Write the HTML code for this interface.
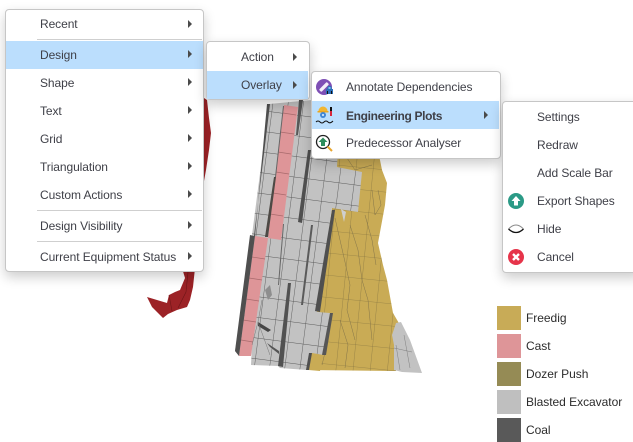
<!DOCTYPE html>
<html><head><meta charset="utf-8">
<style>
html,body{margin:0;padding:0;background:#fff}
#p{position:relative;width:633px;height:442px;overflow:hidden;background:#fff;font-family:"Liberation Sans",sans-serif;font-size:12px;color:#3f4048}
#art{position:absolute;left:0;top:0}
.m{position:absolute;box-sizing:border-box;background:#fff;border:1px solid #c6c6c6;border-radius:4px;box-shadow:0 5px 12px rgba(0,0,0,.2)}
.h{position:absolute;background:#bbdefd}
.t{position:absolute;white-space:nowrap;line-height:16px;height:16px;letter-spacing:-.08px}
.a{position:absolute;width:0;height:0;border-left:4px solid #4a4a4a;border-top:4px solid transparent;border-bottom:4px solid transparent}
.s{position:absolute;height:1px;background:#cfcfcf}
.l{position:absolute;left:526px;white-space:nowrap;line-height:16px;color:#2c2c2c;letter-spacing:-.03px}
.c{position:absolute;left:497px;width:24px;height:24px}
svg.i{position:absolute}
</style></head>
<body><div id="p">
<svg id="art" width="633" height="442" viewBox="0 0 633 442">
<defs>
<pattern id="g" width="15" height="20.4" patternUnits="userSpaceOnUse" patternTransform="matrix(1 .13 -.128 1 269 132)">
<path d="M0 0H15M0 0V20.4" stroke="#5a5a5a" stroke-width=".9" fill="none"/>
</pattern>
<pattern id="y" width="17" height="22" patternUnits="userSpaceOnUse" patternTransform="matrix(1 .1 -.1 1 339 165)">
<path d="M0 0H17M0 0V22" stroke="#75673c" stroke-width=".55" fill="none"/>
</pattern>
<filter id="b"><feGaussianBlur stdDeviation=".35"/></filter>
</defs>
<g filter="url(#b)">
<!-- red -->
<path d="M204 98L207 100 209 118 211 133 209 150 206 170 204 181Z" fill="#9c2326"/>
<path d="M182 268L195 268 193 287 190 300 187 307 177 310 168 314 163 318 152 307 147 297 157 300 167 303 169 295 175 292 180 290 185 278Z" fill="#9c2326"/>
<path d="M188 272L186 292 178 308M169 295L172 311" stroke="#6e1518" stroke-width=".6" fill="none"/>
<!-- yellow -->
<path id="yl" d="M330 150L378 150 382 170 387 183 385 205 378 243 383 265 387 280 393 313 400 325 396 371 307 370 310 353 325 313 317 312 332 208 338 170Z" fill="#c9ab55"/>
<path d="M330 150L378 150 382 170 387 183 385 205 378 243 383 265 387 280 393 313 400 325 396 371 307 370 310 353 325 313 317 312 332 208 338 170Z" fill="url(#y)"/>
<path d="M335 218L340 240 345 262 350 285 347 310 355 340M350 225L358 250 362 280 368 300 372 340M365 215L372 240 376 265M322 320L328 340 322 365M340 320L348 345 345 368M378 190L381 205 375 215 372 190M345 155L355 170 372 165" stroke="#85754a" stroke-width=".5" fill="none"/>
<!-- light gray SE -->
<path d="M396 323L401 322 410 340 422 373 402 372 394 370 394 345 392 335Z" fill="#c2c2c2"/>
<path d="M396 345L400 370M404 335L410 368M394 348L412 352" stroke="#808080" stroke-width=".5" fill="none"/>
<!-- gray silhouette -->
<path d="M269 104L312 100 312 150 338 150 337 167 362 172 358 212 332 208 317 312 330 313 323 355 310 353 307 370 280 368 278 366 251 365 252 345 239 356 235 351 252 235Z" fill="#c2c2c2"/>
<path d="M269 104L312 100 312 150 338 150 337 167 362 172 358 212 332 208 317 312 330 313 323 355 310 353 307 370 280 368 278 366 251 365 252 345 239 356 235 351 252 235Z" fill="url(#g)"/>
<!-- pink -->
<path d="M284 105L298 107 281 240 268 238Z" fill="#de9598"/>
<path d="M255 236L268 238 251 356 239 356Z" fill="#de9598"/>
<path d="M276 172L289 174M273 193L286 195M270 214L283 216M283 113L296 115M280 132L294 134M278 152L291 154M252 257L265 259M249 278L262 280M246 299L259 301M243 320L256 322M241 340L253 342" stroke="#a86a6c" stroke-width=".7" fill="none"/>
<!-- dark strips -->
<path d="M267 104L270 104 254 236 250 235 235 351 239 356 255 236Z" fill="#505050"/>
<path d="M274 177L276 177 268 237 265 237Z" fill="#4e4a44"/>
<path d="M283 106L284 106 276 177 275 177Z" fill="#666"/>
<path d="M299 100L303 100 298 135 296 135Z" fill="#585858"/>
<path d="M308 150L311 150 302 223 298 222Z" fill="#4f4f4f"/>
<path d="M332 210L335 210 320 312 315 311Z" fill="#4f4f4f"/>
<path d="M330 313L333 313 326 355 322 355Z" fill="#565656"/>
<path d="M288 283L291 283 283 367 278 366Z" fill="#515151"/>
<path d="M283 224L284 224 279 285 278 285Z" fill="#666"/>
<path d="M311 225L313 225 303 305 301 305Z" fill="#5a5a5a"/>
<!-- messy area -->
<path d="M265 290L270 285 272 295 268 300Z" fill="#8e8e8e"/>
<path d="M258 322L271 330 268 332 258 326Z" fill="#444"/>
<path d="M267 343L279 351 279 354 270 347Z" fill="#555"/>
<path d="M262 300L258 322 252 345M258 322L270 355" stroke="#777" stroke-width=".5" fill="none"/>
<path d="M309 370L312 353 323 355 320 371Z" fill="#c9ab55"/>
<path d="M306 370L309 353 312 353 309 370Z" fill="#4f4f4f"/>
<path d="M341 209L344 222 346 212Z" fill="#cfcfcf"/>
</g>
</svg>

<div class="c" style="top:306px;background:#c8ab57"></div>
<div class="c" style="top:334px;background:#de9598"></div>
<div class="c" style="top:362px;background:#958b55"></div>
<div class="c" style="top:390px;background:#bfbfbf"></div>
<div class="c" style="top:418px;background:#595959"></div>
<div class="l" style="top:310px">Freedig</div>
<div class="l" style="top:338px">Cast</div>
<div class="l" style="top:366px">Dozer Push</div>
<div class="l" style="top:394px">Blasted Excavator</div>
<div class="l" style="top:422px">Coal</div>

<!-- main menu -->
<div class="m" style="left:5px;top:9px;width:199px;height:263px"></div>
<div class="s" style="left:37px;top:39px;width:165px"></div>
<div class="h" style="left:6px;top:41px;width:197px;height:28px"></div>
<div class="s" style="left:37px;top:210px;width:165px"></div>
<div class="s" style="left:37px;top:241px;width:165px"></div>
<div class="t" style="left:40px;top:16px">Recent</div><div class="a" style="left:188px;top:20px"></div>
<div class="t" style="left:40px;top:47px">Design</div><div class="a" style="left:188px;top:50px"></div>
<div class="t" style="left:40px;top:75px">Shape</div><div class="a" style="left:188px;top:78px"></div>
<div class="t" style="left:40px;top:103px">Text</div><div class="a" style="left:188px;top:106px"></div>
<div class="t" style="left:40px;top:131px">Grid</div><div class="a" style="left:188px;top:134px"></div>
<div class="t" style="left:40px;top:159px">Triangulation</div><div class="a" style="left:188px;top:162px"></div>
<div class="t" style="left:40px;top:187px">Custom Actions</div><div class="a" style="left:188px;top:190px"></div>
<div class="t" style="left:40px;top:218px">Design Visibility</div><div class="a" style="left:188px;top:221px"></div>
<div class="t" style="left:40px;top:249px">Current Equipment Status</div><div class="a" style="left:188px;top:252px"></div>

<!-- submenu 1 -->
<div class="m" style="left:206px;top:41px;width:104px;height:59px"></div>
<div class="h" style="left:207px;top:71px;width:101px;height:28px"></div>
<div class="t" style="left:241px;top:49px">Action</div><div class="a" style="left:293px;top:53px"></div>
<div class="t" style="left:241px;top:77px">Overlay</div><div class="a" style="left:293px;top:81px"></div>

<!-- submenu 2 -->
<div class="m" style="left:311px;top:71px;width:190px;height:88px"></div>
<div class="h" style="left:312px;top:101px;width:187px;height:28px"></div>
<div class="t" style="left:346px;top:79px">Annotate Dependencies</div>
<div class="t" style="left:346px;top:108px;font-weight:bold;letter-spacing:-.35px">Engineering Plots</div><div class="a" style="left:484px;top:111px"></div>
<div class="t" style="left:346px;top:135px">Predecessor Analyser</div>

<svg class="i" style="left:315px;top:78px" width="20" height="20" viewBox="0 0 20 20">
<circle cx="9" cy="9" r="8" fill="#7e4fb5"/>
<rect x="3.5" y="7.3" width="11" height="3.4" rx="1" transform="rotate(-45 9 9)" fill="#f3eef9"/>
<path d="M13 8h3l1 3h1v5h-7v-5h1z" fill="#2d6fb8"/>
<path d="M12 13h1v3h-1zM16 13h1v3h-1z" fill="#111"/>
<path d="M13.5 9h2v2h-2z" fill="#7cc4ef"/>
</svg>
<svg class="i" style="left:315px;top:105px" width="20" height="20" viewBox="0 0 20 20">
<path d="M3.5 6a4.500 4.500 0 0 1 9 0z" fill="#f2b632"/>
<rect x="2.500" y="6" width="11" height="1.500" fill="#e9a620"/>
<circle cx="8" cy="10" r="3" fill="#3f86d6"/>
<circle cx="8" cy="10" r="1.100" fill="#cfe4f8"/>
<rect x="15" y="2" width="2" height="4" fill="#111"/>
<rect x="15" y="6" width="2" height="5" fill="#d8263a"/>
<path d="M1 17q2-2 4 0t4 0 4 0 5-1" stroke="#111" fill="none" stroke-width="1"/>
</svg>
<svg class="i" style="left:315px;top:134px" width="20" height="20" viewBox="0 0 20 20">
<circle cx="8" cy="8" r="6.500" fill="#fff" stroke="#222" stroke-width="1.300"/>
<path d="M8 3.500L12.500 8H10v4H6V8H3.500z" fill="#2c8c5c"/>
<path d="M12.500 12.500L17 17" stroke="#e8a530" stroke-width="2"/>
</svg>

<!-- submenu 3 -->
<div class="m" style="left:502px;top:101px;width:140px;height:172px"></div>
<div class="t" style="left:537px;top:109px">Settings</div>
<div class="t" style="left:537px;top:137px">Redraw</div>
<div class="t" style="left:537px;top:165px">Add Scale Bar</div>
<div class="t" style="left:537px;top:193px">Export Shapes</div>
<div class="t" style="left:537px;top:221px">Hide</div>
<div class="t" style="left:537px;top:249px">Cancel</div>

<svg class="i" style="left:508px;top:193px" width="16" height="16" viewBox="0 0 16 16">
<circle cx="8" cy="8" r="8" fill="#2b9a86"/>
<path d="M8 3L12.500 8H10v4.500H6V8H3.500z" fill="#fff"/>
</svg>
<svg class="i" style="left:508px;top:222px" width="16" height="14" viewBox="0 0 16 14">
<path d="M.5 7Q8-1 15.500 7" fill="#fff" stroke="#8a8a8a" stroke-width=".9"/>
<path d="M.5 7Q8 14 15.500 7" fill="#fff" stroke="#111" stroke-width="1.300"/>
</svg>
<svg class="i" style="left:508px;top:249px" width="16" height="16" viewBox="0 0 16 16">
<circle cx="8" cy="8" r="8" fill="#e6344a"/>
<path d="M5 5L11 11M11 5L5 11" stroke="#fff" stroke-width="2.400"/>
</svg>
</div></body></html>
